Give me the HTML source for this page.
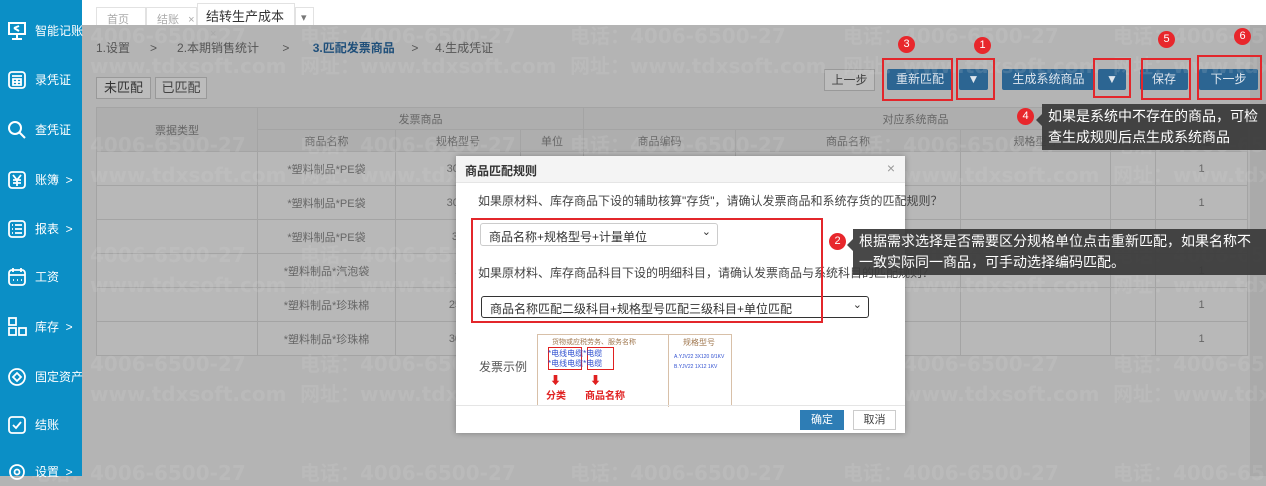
<!DOCTYPE html>
<html><head><meta charset="utf-8"><style>
*{margin:0;padding:0;box-sizing:border-box}
body{width:1266px;height:476px;overflow:hidden;position:relative;font-family:"Liberation Sans","Noto Sans CJK SC",sans-serif;background:#b4b4b4;font-size:12px}
.abs{position:absolute}
#side{left:0;top:0;width:82px;height:476px;background:#0b8fc6;z-index:5}
.si{position:absolute;left:0;width:82px;height:24px;color:#fff;font-size:12px}
.si svg{position:absolute;left:7px;top:2px}
.si span{position:absolute;left:35px;top:3px;white-space:nowrap}
#tabs{left:82px;top:0;width:1184px;height:25px;background:#fff}
.tab{position:absolute;top:7px;height:18px;border:1px solid #e2e2e2;border-bottom:none;color:#aaa;font-size:11px;padding:3px 0 0 10px;background:#fff}
.wm{position:absolute;color:rgba(215,215,215,.16);font-size:20px;font-weight:bold;white-space:nowrap;z-index:4;font-family:"DejaVu Sans","Noto Sans CJK SC",sans-serif}
table{border-collapse:collapse;position:absolute;left:96px;top:107px;width:1151px;table-layout:fixed}
td{border:1px solid #a4a4a4;text-align:center;color:#666;font-size:11px;height:34px;background:#b8b8b8}
tr.h td{background:#aeaeae;height:22px}
.btn{position:absolute;height:21px;color:#dfe6ee;background:#2c6592;font-size:12px;text-align:center;line-height:21px;border-radius:2px}
.rb{position:absolute;border:2px solid #e3262b;z-index:9}
.num{position:absolute;width:17px;height:17px;border-radius:50%;background:#e8272c;color:#fff;font-size:11px;text-align:center;line-height:17px;z-index:10}
.tip{position:absolute;background:rgba(58,58,58,.93);color:#fff;font-size:14px;line-height:21px;padding:2px 6px;z-index:10}
.tip:before{content:"";position:absolute;left:-6px;top:10px;border:6px solid transparent;border-right-color:rgba(58,58,58,.93);border-left:none}
#dlg{left:456px;top:156px;width:449px;height:277px;background:#fff;z-index:6;box-shadow:0 0 6px rgba(0,0,0,.3)}
.sel{position:absolute;border:1px solid #ccc;border-radius:3px;font-size:12px;color:#333;padding:4px 0 0 8px;background:#fff}
.sel i{position:absolute;right:6px;top:1px;font-style:normal;font-size:11px}
</style></head><body>
<div id="side" class="abs">
 <div class="si" style="top:19px"><svg width="20" height="20" viewBox="0 0 20 20" fill="none" stroke="#fff" stroke-width="2"><rect x="2" y="2" width="16" height="11"/><path d="M10 13v4M5 18h10M7 7l5-2M7 7l5 3"/></svg><span>智能记账</span></div>
 <div class="si" style="top:68px"><svg width="20" height="20" viewBox="0 0 20 20" fill="none" stroke="#fff" stroke-width="1.8"><rect x="2" y="2" width="16" height="16" rx="3"/><path d="M5 6h10M6 9h8v6H6zM10 9v6M6 12h8"/></svg><span>录凭证</span></div>
 <div class="si" style="top:118px"><svg width="20" height="20" viewBox="0 0 20 20" fill="none" stroke="#fff" stroke-width="2"><circle cx="8" cy="8" r="6"/><path d="M12 12l6 6"/></svg><span>查凭证</span></div>
 <div class="si" style="top:168px"><svg width="20" height="20" viewBox="0 0 20 20" fill="none" stroke="#fff" stroke-width="1.8"><rect x="2" y="2" width="16" height="16" rx="3"/><path d="M6 5l4 5 4-5M10 10v6M6 10h8M6 13h8"/></svg><span>账簿 &nbsp;&gt;</span></div>
 <div class="si" style="top:217px"><svg width="20" height="20" viewBox="0 0 20 20" fill="none" stroke="#fff" stroke-width="1.8"><rect x="2" y="2" width="16" height="16" rx="3"/><path d="M5 6h1M8 6h7M5 10h1M8 10h7M5 14h1M8 14h7"/></svg><span>报表 &nbsp;&gt;</span></div>
 <div class="si" style="top:265px"><svg width="20" height="20" viewBox="0 0 20 20" fill="none" stroke="#fff" stroke-width="1.8"><rect x="2" y="3" width="16" height="15" rx="3"/><path d="M2 8h16M6 1v4M14 1v4M6 13h1M10 13h1M14 13h1"/></svg><span>工资</span></div>
 <div class="si" style="top:315px"><svg width="22" height="20" viewBox="0 0 22 20" fill="none" stroke="#fff" stroke-width="1.8"><rect x="2" y="1" width="7" height="7"/><rect x="2" y="11" width="7" height="7"/><rect x="12" y="11" width="7" height="7"/></svg><span>库存 &nbsp;&gt;</span></div>
 <div class="si" style="top:365px"><svg width="20" height="20" viewBox="0 0 20 20" fill="none" stroke="#fff" stroke-width="1.8"><circle cx="10" cy="10" r="8"/><path d="M10 6l4 4-4 4-4-4z"/></svg><span>固定资产</span></div>
 <div class="si" style="top:413px"><svg width="20" height="20" viewBox="0 0 20 20" fill="none" stroke="#fff" stroke-width="1.8"><rect x="2" y="2" width="16" height="16" rx="3"/><path d="M6 10l3 3 5-6"/></svg><span>结账</span></div>
 <div class="si" style="top:460px"><svg width="20" height="20" viewBox="0 0 20 20" fill="none" stroke="#fff" stroke-width="1.8"><circle cx="10" cy="10" r="7"/><circle cx="10" cy="10" r="2.5"/></svg><span>设置 &nbsp;&gt;</span></div>
</div>
<div id="tabs" class="abs">
 <div class="tab" style="left:14px;width:50px">首页</div>
 <div class="tab" style="left:64px;width:51px">结账 <span style="margin-left:6px">×</span></div>
 <div class="tab" style="left:115px;top:3px;height:22px;width:98px;color:#333;font-size:13px;padding-top:2px;padding-left:8px">结转生产成本 <span style="color:#aaa;font-size:11px;margin-left:4px">×</span></div>
 <div class="tab" style="left:213px;width:19px;padding-left:5px;color:#777">▾</div>
</div>
<div class="abs" style="left:1250px;top:25px;width:16px;height:451px;background:#aaa"></div>
<div class="abs" style="left:96px;top:39px;color:#555;font-size:12px;white-space:nowrap">1.设置&nbsp;&nbsp;&nbsp;&nbsp;&nbsp;&nbsp;&gt;&nbsp;&nbsp;&nbsp;&nbsp;&nbsp;&nbsp;2.本期销售统计&nbsp;&nbsp;&nbsp;&nbsp;&nbsp;&nbsp;&nbsp;&gt;&nbsp;&nbsp;&nbsp;&nbsp;&nbsp;&nbsp;&nbsp;<b style="color:#1f4f7a">3.匹配发票商品</b>&nbsp;&nbsp;&nbsp;&nbsp;&nbsp;&gt;&nbsp;&nbsp;&nbsp;&nbsp;&nbsp;4.生成凭证</div>
<div class="abs" style="left:96px;top:77px;width:55px;height:22px;border:1px solid #999;background:#bcbcbc;font-size:13px;color:#333;text-align:center;line-height:20px">未匹配</div>
<div class="abs" style="left:155px;top:77px;width:52px;height:22px;border:1px solid #999;background:#bcbcbc;font-size:13px;color:#444;text-align:center;line-height:20px">已匹配</div>
<table>
<colgroup><col style="width:161px"><col style="width:138px"><col style="width:125px"><col style="width:63px"><col style="width:152px"><col style="width:225px"><col style="width:150px"><col style="width:45px"><col style="width:92px"></colgroup>
<tr class="h"><td rowspan="2">票据类型</td><td colspan="3">发票商品</td><td colspan="5">对应系统商品</td></tr>
<tr class="h"><td>商品名称</td><td>规格型号</td><td>单位</td><td>商品编码</td><td>商品名称</td><td>规格型号</td><td></td><td>数量</td></tr>
<tr><td></td><td>*塑料制品*PE袋</td><td>300*</td><td></td><td></td><td></td><td></td><td></td><td>1</td></tr>
<tr><td></td><td>*塑料制品*PE袋</td><td>300*</td><td></td><td></td><td></td><td></td><td></td><td>1</td></tr>
<tr><td></td><td>*塑料制品*PE袋</td><td>32</td><td></td><td></td><td></td><td></td><td></td><td>1</td></tr>
<tr><td></td><td>*塑料制品*汽泡袋</td><td>1</td><td></td><td></td><td></td><td></td><td></td><td>1</td></tr>
<tr><td></td><td>*塑料制品*珍珠棉</td><td>254</td><td></td><td></td><td></td><td></td><td></td><td>1</td></tr>
<tr><td></td><td>*塑料制品*珍珠棉</td><td>300</td><td></td><td></td><td></td><td></td><td></td><td>1</td></tr>
</table>
<div class="abs" style="left:824px;top:69px;width:51px;height:22px;border:1px solid #999;background:#bdbdbd;color:#444;text-align:center;line-height:20px">上一步</div>
<div class="btn" style="left:887px;top:69px;width:66px">重新匹配</div>
<div class="btn" style="left:959px;top:69px;width:29px">▼</div>
<div class="btn" style="left:1002px;top:69px;width:93px">生成系统商品</div>
<div class="btn" style="left:1098px;top:69px;width:28px">▼</div>
<div class="btn" style="left:1140px;top:69px;width:48px">保存</div>
<div class="btn" style="left:1199px;top:69px;width:59px">下一步</div>
<div class="rb" style="left:882px;top:58px;width:71px;height:43px"></div>
<div class="rb" style="left:956px;top:58px;width:39px;height:42px"></div>
<div class="rb" style="left:1093px;top:58px;width:38px;height:40px"></div>
<div class="rb" style="left:1141px;top:58px;width:50px;height:42px"></div>
<div class="rb" style="left:1197px;top:55px;width:65px;height:45px"></div>
<div class="num" style="left:898px;top:36px">3</div>
<div class="num" style="left:974px;top:37px">1</div>
<div class="num" style="left:1158px;top:31px">5</div>
<div class="num" style="left:1234px;top:28px">6</div>
<div class="num" style="left:1017px;top:108px">4</div>
<div class="num" style="left:829px;top:233px">2</div>
<div class="tip" style="left:1042px;top:104px;width:224px;height:46px;padding-top:2px">如果是系统中不存在的商品，可检查生成规则后点生成系统商品</div>
<div class="tip" style="left:853px;top:229px;width:413px;height:46px">根据需求选择是否需要区分规格单位点击重新匹配，如果名称不一致实际同一商品，可手动选择编码匹配。</div>
<div id="dlg" class="abs">
 <div class="abs" style="left:0;top:0;width:449px;height:27px;background:#f4f4f4;border-bottom:1px solid #e5e5e5;font-weight:bold;font-size:12px;color:#333;padding:6px 0 0 9px">商品匹配规则<span style="position:absolute;right:10px;top:4px;font-weight:normal;color:#999;font-size:14px">×</span></div>
 <div class="abs" style="left:22px;top:36px;font-size:12px;color:#444;white-space:nowrap">如果原材料、库存商品下设的辅助核算"存货"，请确认发票商品和系统存货的匹配规则？</div>
 <div class="sel" style="left:24px;top:67px;width:238px;height:23px">商品名称+规格型号+计量单位<i>⌄</i></div>
 <div class="abs" style="left:22px;top:108px;font-size:12px;color:#444;white-space:nowrap">如果原材料、库存商品科目下设的明细科目，请确认发票商品与系统科目的匹配规则？</div>
 <div class="sel" style="left:25px;top:140px;width:388px;height:22px;border:1.5px solid #333;padding-top:3px">商品名称匹配二级科目+规格型号匹配三级科目+单位匹配<i>⌄</i></div>
 <div class="abs" style="left:23px;top:202px;font-size:12px;color:#555">发票示例</div>
 <div class="abs" style="left:81px;top:178px;width:195px;height:72px;border:1px solid #d8c0a8;border-bottom:none;background:#fff">
  <div class="abs" style="left:130px;top:0;width:1px;height:72px;background:#d8c0a8"></div>
  <div class="abs" style="left:14px;top:2px;font-size:7px;color:#a07850;white-space:nowrap">货物或应税劳务、服务名称</div>
  <div class="abs" style="left:145px;top:2px;font-size:8px;color:#a07850">规格型号</div>
  <div class="abs" style="left:10px;top:12px;width:34px;height:23px;border:1.5px solid #e02020"></div>
  <div class="abs" style="left:49px;top:12px;width:27px;height:23px;border:1.5px solid #e02020"></div>
  <div class="abs" style="left:10px;top:14px;font-size:8px;color:#3050d0;line-height:10px;white-space:nowrap">*电线电缆*电缆<br>*电线电缆*电缆</div>
  <div class="abs" style="left:136px;top:17px;font-size:5px;color:#3050d0;line-height:10px;white-space:nowrap">A.YJV22 3X120 0/1KV<br>B.YJV22 1X12 1KV</div>
  <div class="abs" style="left:12px;top:37px;color:#e02020;font-size:11px;font-weight:bold">⬇</div>
  <div class="abs" style="left:52px;top:37px;color:#e02020;font-size:11px;font-weight:bold">⬇</div>
  <div class="abs" style="left:8px;top:52px;color:#e02020;font-size:10px;font-weight:bold;white-space:nowrap">分类</div>
  <div class="abs" style="left:47px;top:52px;color:#e02020;font-size:10px;font-weight:bold;white-space:nowrap">商品名称</div>
 </div>
 <div class="abs" style="left:0;top:249px;width:449px;height:1px;background:#e5e5e5"></div>
 <div class="abs" style="left:344px;top:254px;width:44px;height:20px;background:#2e7db5;color:#fff;text-align:center;line-height:20px;font-size:11px">确定</div>
 <div class="abs" style="left:397px;top:254px;width:43px;height:20px;border:1px solid #ccc;color:#444;text-align:center;line-height:18px;font-size:11px">取消</div>
</div>
<div class="rb" style="left:471px;top:218px;width:352px;height:105px"></div>
<div class="wm" style="left:30px;top:20px">电话：4006-6500-27</div>
<div class="wm" style="left:30px;top:50px">网址：www.tdxsoft.com</div>
<div class="wm" style="left:300px;top:20px">电话：4006-6500-27</div>
<div class="wm" style="left:300px;top:50px">网址：www.tdxsoft.com</div>
<div class="wm" style="left:570px;top:20px">电话：4006-6500-27</div>
<div class="wm" style="left:570px;top:50px">网址：www.tdxsoft.com</div>
<div class="wm" style="left:843px;top:20px">电话：4006-6500-27</div>
<div class="wm" style="left:843px;top:50px">网址：www.tdxsoft.com</div>
<div class="wm" style="left:1113px;top:20px">电话：4006-6500-27</div>
<div class="wm" style="left:1113px;top:50px">网址：www.tdxsoft.com</div>
<div class="wm" style="left:30px;top:129px">电话：4006-6500-27</div>
<div class="wm" style="left:30px;top:159px">网址：www.tdxsoft.com</div>
<div class="wm" style="left:300px;top:129px">电话：4006-6500-27</div>
<div class="wm" style="left:300px;top:159px">网址：www.tdxsoft.com</div>
<div class="wm" style="left:570px;top:129px">电话：4006-6500-27</div>
<div class="wm" style="left:570px;top:159px">网址：www.tdxsoft.com</div>
<div class="wm" style="left:843px;top:129px">电话：4006-6500-27</div>
<div class="wm" style="left:843px;top:159px">网址：www.tdxsoft.com</div>
<div class="wm" style="left:1113px;top:129px">电话：4006-6500-27</div>
<div class="wm" style="left:1113px;top:159px">网址：www.tdxsoft.com</div>
<div class="wm" style="left:30px;top:239px">电话：4006-6500-27</div>
<div class="wm" style="left:30px;top:269px">网址：www.tdxsoft.com</div>
<div class="wm" style="left:300px;top:239px">电话：4006-6500-27</div>
<div class="wm" style="left:300px;top:269px">网址：www.tdxsoft.com</div>
<div class="wm" style="left:570px;top:239px">电话：4006-6500-27</div>
<div class="wm" style="left:570px;top:269px">网址：www.tdxsoft.com</div>
<div class="wm" style="left:843px;top:239px">电话：4006-6500-27</div>
<div class="wm" style="left:843px;top:269px">网址：www.tdxsoft.com</div>
<div class="wm" style="left:1113px;top:239px">电话：4006-6500-27</div>
<div class="wm" style="left:1113px;top:269px">网址：www.tdxsoft.com</div>
<div class="wm" style="left:30px;top:348px">电话：4006-6500-27</div>
<div class="wm" style="left:30px;top:378px">网址：www.tdxsoft.com</div>
<div class="wm" style="left:300px;top:348px">电话：4006-6500-27</div>
<div class="wm" style="left:300px;top:378px">网址：www.tdxsoft.com</div>
<div class="wm" style="left:570px;top:348px">电话：4006-6500-27</div>
<div class="wm" style="left:570px;top:378px">网址：www.tdxsoft.com</div>
<div class="wm" style="left:843px;top:348px">电话：4006-6500-27</div>
<div class="wm" style="left:843px;top:378px">网址：www.tdxsoft.com</div>
<div class="wm" style="left:1113px;top:348px">电话：4006-6500-27</div>
<div class="wm" style="left:1113px;top:378px">网址：www.tdxsoft.com</div>
<div class="wm" style="left:30px;top:457px">电话：4006-6500-27</div>
<div class="wm" style="left:300px;top:457px">电话：4006-6500-27</div>
<div class="wm" style="left:570px;top:457px">电话：4006-6500-27</div>
<div class="wm" style="left:843px;top:457px">电话：4006-6500-27</div>
<div class="wm" style="left:1113px;top:457px">电话：4006-6500-27</div>
</body></html>
